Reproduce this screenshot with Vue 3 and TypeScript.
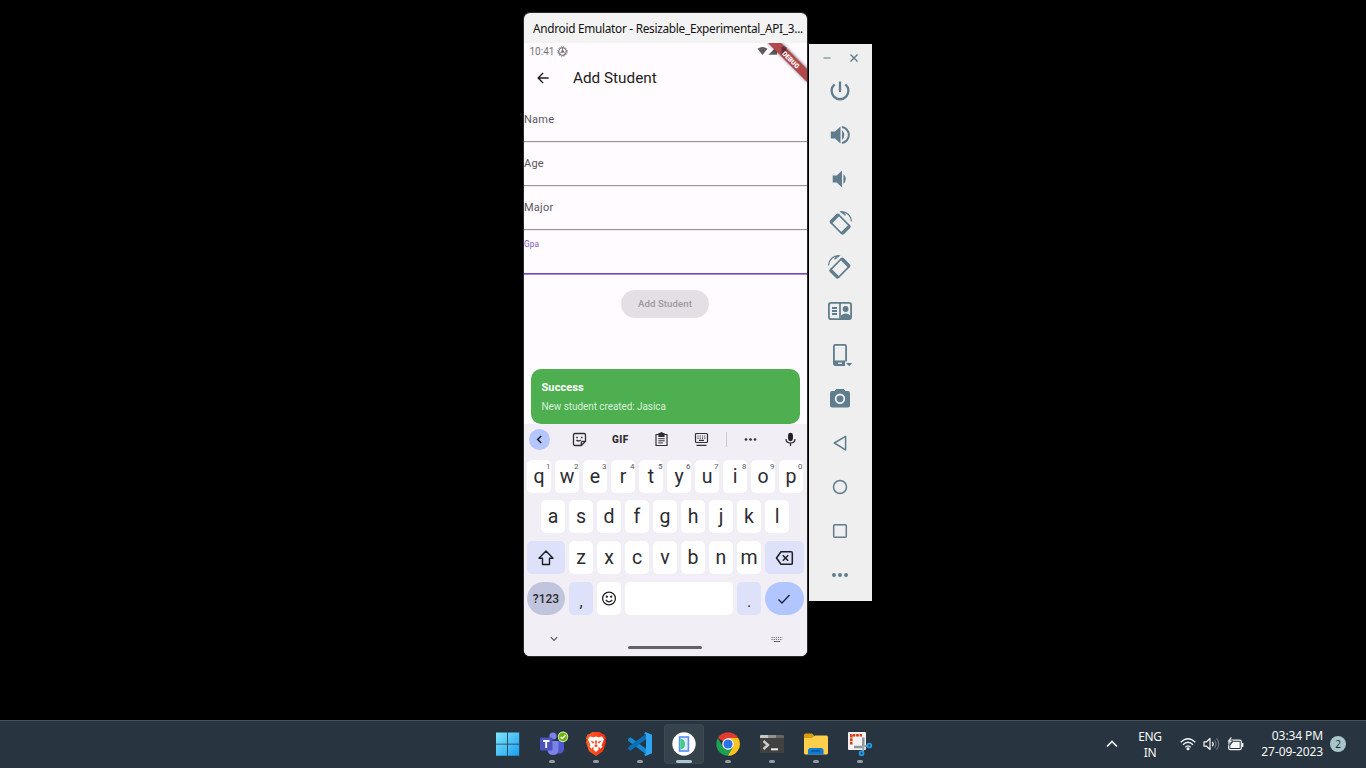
<script setup lang="ts">
interface Key { label: string; hint?: string }

const topKeys: Key[] = 'qwertyuiop'.split('').map((label, i) => ({ label, hint: String((i + 1) % 10) }))
const homeKeys: Key[] = 'asdfghjkl'.split('').map((label) => ({ label }))
const bottomKeys: Key[] = 'zxcvbnm'.split('').map((label) => ({ label }))
const fields: string[] = ['Name', 'Age', 'Major']
</script>

<template>
  <div class="screen">
    <main class="desktop">
      <section class="phone">
        <header class="titlebar"><span>Android Emulator - Resizable_Experimental_API_3...</span></header>
        <div class="app">
          <div class="status">
            <span class="clock">10:41</span>
            <svg class="bug" width="11" height="11" viewBox="0 0 11 11" fill="none" stroke="#69666b">
              <circle cx="5.5" cy="5.5" r="3.7" stroke-width="1.1" />
              <circle cx="5.5" cy="5.5" r="4.7" stroke-width="1" stroke-dasharray="1.2 1.26" />
              <path d="M5.5 5.5V2M5.5 5.5l3 2M5.5 5.5l-3 2" stroke-width=".8" />
              <circle cx="5.5" cy="5.5" r="1.2" fill="#69666b" stroke="none" />
            </svg>
            <svg class="signals" width="22" height="12" viewBox="0 0 22 12" fill="#5f5c61">
              <path d="M.5 3.8Q5.5 0 10.5 3.8L5.5 9.9z" />
              <path d="M20 1.2V9.8H11.4z" />
            </svg>
          </div>
          <svg class="ribbon" width="50" height="50" viewBox="0 0 50 50">
            <defs><filter id="soft" x="-20%" y="-20%" width="140%" height="140%"><feGaussianBlur stdDeviation="1.6" /></filter></defs>
            <path d="M10 -1L24 -1L51 26V40z" fill="#000" opacity=".5" filter="url(#soft)" />
            <path d="M11 0H24L50 26V39z" fill="#b1484b" />
            <path d="M24.5 4.2h1V3.400h3v.8h1v7.600h-5z" fill="#50272a" opacity=".8" />
            <text x="33.600" y="17" transform="rotate(45 33.6 17)" text-anchor="middle" dominant-baseline="central">DEBUG</text>
          </svg>
          <div class="appbar">
            <svg width="12" height="12" viewBox="0 0 12 12" fill="none" stroke="#1f1d21" stroke-width="1.3"><path d="M11.6 6H1.2M6.1 1L1.1 6l5 5" /></svg>
            <h1>Add Student</h1>
          </div>
          <div class="form">
            <div v-for="f in fields" :key="f" class="field">{{ f }}</div>
            <div class="field focused">Gpa</div>
            <div class="submit">Add Student</div>
          </div>
          <div class="snack">
            <strong>Success</strong>
            <span>New student created: Jasica</span>
          </div>
          <div class="keyboard">
            <div class="tools">
              <span class="back"><svg width="21" height="21" viewBox="0 0 21 21" fill="none" stroke="#1b1c20" stroke-width="1.5"><path d="M12.2 7L8.7 10.5l3.5 3.5" /></svg></span>
              <svg width="15" height="15" viewBox="0 0 15 15" fill="none" stroke="#303034" stroke-width="1.3">
                <path d="M3 1.5h9q1.5 0 1.5 1.5v6.3L9.3 13.5H3Q1.5 13.5 1.5 12V3q0-1.5 1.5-1.5z" /><path d="M13.4 9.3H10.5q-1.2 0-1.2 1.2v3" /><path d="M4.5 8q1.800 2 4.500 0" /><path d="M4.3 5.400h1.500M9 5.400h1.500" stroke-width="1.5" />
              </svg>
              <b class="gif">GIF</b>
              <svg width="15" height="15" viewBox="0 0 15 15" fill="none" stroke="#303034" stroke-width="1.2">
                <path d="M2 2.500h11v11H2z" stroke-linejoin="round" /><path d="M5 2.500V4.300h5V1.600H5z" fill="#303034" /><circle cx="7.500" cy="1.700" r="1" /><path d="M4.300 6.700h6.400M4.300 8.800h6.400M4.300 10.900h4.500" stroke-width="1" />
              </svg>
              <svg width="15" height="15" viewBox="0 0 15 15" fill="none" stroke="#303034" stroke-width="1.2">
                <rect x="1.500" y="1.500" width="12" height="9" rx="1" /><path d="M3.500 4h8M3.500 6.100h8" stroke-dasharray="1.100 1.150" /><path d="M5 8.400h5M2.500 13.300h10" />
              </svg>
              <i class="sep"></i>
              <svg width="13" height="5" viewBox="0 0 13 5" fill="#303034"><circle cx="2" cy="2.500" r="1.350" /><circle cx="6.500" cy="2.500" r="1.350" /><circle cx="11" cy="2.500" r="1.350" /></svg>
              <svg width="11" height="15" viewBox="0 0 11 15" fill="none" stroke="#222226" stroke-width="1.200"><rect x="3.700" y="1.400" width="3.600" height="7.200" rx="1.800" fill="#222226" /><path d="M1 7q0 4 4.500 4T10 7M5.500 11v3" /></svg>
            </div>
            <div class="row">
              <span v-for="k in topKeys" :key="k.label" class="key">{{ k.label }}<sup>{{ k.hint }}</sup></span>
            </div>
            <div class="row home">
              <span v-for="k in homeKeys" :key="k.label" class="key">{{ k.label }}</span>
            </div>
            <div class="row third">
              <span class="key wide tint"><svg width="18" height="18" viewBox="0 0 18 18" fill="none" stroke="#1f2025" stroke-width="1.400"><path d="M9 2L16 9.300H12.500V15.500H5.500V9.300H2z" stroke-linejoin="round" /></svg></span>
              <span v-for="k in bottomKeys" :key="k.label" class="key">{{ k.label }}</span>
              <span class="key wide tint"><svg width="19" height="16" viewBox="0 0 19 16" fill="none" stroke="#1f2025" stroke-width="1.500"><path d="M6 1.700h10.200q1.100 0 1.100 1.100v10.400q0 1.100-1.100 1.100H6L1.500 8z" stroke-linejoin="round" /><path d="M7.800 5.200l5.400 5.600M13.200 5.200l-5.400 5.600" /></svg></span>
            </div>
            <div class="row fourth">
              <span class="key wide round sym">?123</span>
              <span class="key tint punct">,</span>
              <span class="key"><svg width="16" height="16" viewBox="0 0 16 16" fill="none" stroke="#222226" stroke-width="1.300"><circle cx="8" cy="7.500" r="6.400" /><path d="M4.800 8.800q3.200 4 6.400 0" /><circle cx="5.800" cy="5.700" r=".500" fill="#222226" /><circle cx="10.200" cy="5.700" r=".500" fill="#222226" /></svg></span>
              <span class="key space"></span>
              <span class="key tint punct">.</span>
              <span class="key wide round enter"><svg width="14" height="12" viewBox="0 0 14 12" fill="none" stroke="#1c2540" stroke-width="1.400"><path d="M1.500 6.500l3.500 3.500L12.500 2" /></svg></span>
            </div>
            <div class="nav">
              <svg width="8" height="6" viewBox="0 0 8 6" fill="none" stroke="#55535a" stroke-width="1.100"><path d="M.8 1.200L4 4.400l3.200-3.200" /></svg>
              <i class="handle"></i>
              <svg width="12" height="7" viewBox="0 0 12 7" stroke="#66646a" stroke-width="1"><path d="M.5 1.500h11M.5 3.500h11" stroke-dasharray="1.100 1.050" /><path d="M3 5.500h6" /></svg>
            </div>
          </div>
        </div>
      </section>

      <aside class="panel">
        <div class="winctl">
          <svg width="10" height="10" viewBox="0 0 10 10" stroke="#8ba0aa" stroke-width="1.500"><path d="M1.500 5h7" /></svg>
          <svg width="10" height="10" viewBox="0 0 10 10" stroke="#5d7987" stroke-width="1.400"><path d="M1.500 1.500l7 7M8.500 1.500l-7 7" /></svg>
        </div>
        <!-- power -->
        <svg viewBox="0 0 32 32"><path class="ln" stroke-width="2.300" d="M16 6.500v10.500M10.600 9.400a8.400 8.400 0 1 0 10.800 0" /></svg>
        <!-- volume up -->
        <svg viewBox="0 0 32 32"><path class="fl" d="M6.800 12.500h4.200l5.500-5v17L11 19.500H6.800zM18 11q4.600 5 0 10z" /><path class="ln" stroke-width="2" d="M18 8a8.100 8.100 0 0 1 0 16" /></svg>
        <!-- volume down -->
        <svg viewBox="0 0 32 32"><path class="fl" d="M8.700 12.500h4l5.300-4.900v16.800l-5.300-4.900h-4zM19.400 11q4.800 5 0 10z" /></svg>
        <!-- rotate left -->
        <svg viewBox="0 0 32 32"><g transform="translate(0 1) rotate(-45 16 16)"><rect class="ln" x="10.500" y="7.500" width="11" height="17" rx="1.500" stroke-width="1.600" /><path class="fl" d="M9.700 8.500q0-2 2-2h8.600q2 0 2 2v1.500H9.700zM9.700 22.500h12.600v1.500q0 2-2 2h-8.600q-2 0-2-2z" /></g><path class="ln" stroke-width="1.200" d="M16.500 4.900q9.500-.4 11 9.400" /><path class="fl" d="M15.500 4.300h3.500l3 3.700-1 .8z" /></svg>
        <!-- rotate right -->
        <svg viewBox="0 0 32 32"><g transform="translate(0 1) rotate(45 16 16)"><rect class="ln" x="10.500" y="7.500" width="11" height="17" rx="1.500" stroke-width="1.600" /><path class="fl" d="M9.700 8.500q0-2 2-2h8.600q2 0 2 2v1.500H9.700zM9.700 22.500h12.600v1.500q0 2-2 2h-8.600q-2 0-2-2z" /></g><path class="ln" stroke-width="1.200" d="M15.500 4.900q-9.500-.4-11 9.400" /><path class="fl" d="M16.500 4.300h-3.500l-3 3.700 1 .8z" /></svg>
        <!-- fold posture -->
        <svg viewBox="0 0 32 32"><rect class="ln" x="4.900" y="7.900" width="22.200" height="16.200" rx="2" stroke-width="1.800" /><path class="ln" stroke-width="1.700" d="M16 8v16" /><path class="ln" stroke-width="1.900" d="M8 13h5M8 16h5M8 19h5" /><circle class="fl" cx="21.600" cy="14" r="2.900" /><path class="fl" d="M17 24v-3.500q4.500-3.800 9.500 0V24z" /></svg>
        <!-- device size -->
        <svg viewBox="0 0 32 32"><rect class="ln" x="9.900" y="5.900" width="12.200" height="20.200" rx="1.500" stroke-width="1.800" /><path class="fl" d="M9.500 21.500h13v3.500q0 1.500-1.500 1.500H11q-1.500 0-1.500-1.500z" /><path d="M14 24.200h4" stroke="#efefef" stroke-width="1.300" /><path class="halo" d="M21 22.500h8v7h-8z" /><path class="fl" d="M22 24h6.200l-3.100 3.200z" /></svg>
        <!-- camera -->
        <svg viewBox="0 0 32 32"><path class="fl" d="M12.300 6h7.400l1.800 2H24q2 0 2 2v12.500q0 2-2 2H8q-2 0-2-2V10q0-2 2-2h2.500z" /><circle cx="16" cy="15.800" r="4.300" fill="none" stroke="#efefef" stroke-width="1.800" /></svg>
        <svg viewBox="0 0 32 32"><path class="ln" stroke-width="1.500" stroke-linejoin="round" d="M21.600 9.300v13.600L10.300 16z" /></svg>
        <svg viewBox="0 0 32 32"><circle class="ln" stroke-width="1.500" cx="16" cy="16" r="6.500" /></svg>
        <svg viewBox="0 0 32 32"><rect class="ln" stroke-width="1.500" x="9.700" y="9.700" width="12.600" height="12.600" rx="1" /></svg>
        <svg viewBox="0 0 32 32"><circle class="fl" cx="10" cy="16" r="2" /><circle class="fl" cx="16" cy="16" r="2" /><circle class="fl" cx="22" cy="16" r="2" /></svg>
      </aside>
    </main>

    <footer class="taskbar">
      <div class="apps">
        <span class="tile">
          <svg viewBox="0 0 24 24"><defs><linearGradient id="win" x1="0" y1="0" x2="1" y2="1"><stop offset="0" stop-color="#7ee8fb" /><stop offset="1" stop-color="#1a9df0" /></linearGradient></defs><path fill="url(#win)" d="M0 .5h11.200v11.200H0zM12 .5h11.200v11.200H12zM0 12.500h11.200v11.200H0zM12 12.500h11.200v11.200H12z" /></svg>
        </span>
        <span class="tile run">
          <svg viewBox="0 0 24 24"><circle cx="13" cy="4" r="3.600" fill="#7b83eb" /><path d="M17 9h7v8q0 4-4 4.500h-3z" fill="#5059c9" /><path d="M7.500 9h11v8q0 6-5.500 6t-5.500-6z" fill="#7b83eb" /><rect y="5.500" width="12.500" height="13" rx="1" fill="#4b53bc" /><path d="M3 9h6.500M6.200 9v7" stroke="#fff" stroke-width="1.900" /><circle cx="23" cy="4.800" r="5.200" fill="#eaf5da" /><circle cx="23" cy="4.800" r="4.400" fill="#6bb700" /><path d="M20.600 4.900l1.700 1.700 3.200-3.400" stroke="#fff" stroke-width="1.400" fill="none" /></svg>
        </span>
        <span class="tile run">
          <svg viewBox="0 0 24 24"><defs><linearGradient id="brv"><stop offset="0" stop-color="#ff6327" /><stop offset="1" stop-color="#f52b10" /></linearGradient></defs><path fill="url(#brv)" d="M8 0h8l2.300 2 2.200.5L22 6l-.7 2 .7 2.300-3 9L12 24l-7-4.700-3-9L2.700 8 2 6l1.500-3.500L5.700 2z" /><path fill="#fff" d="M6 4.500l3.500.7L12 4.600l2.500.6 3.500-.7 2 3-1 2.300-1.500 3.500 1 1.500-2 2-1-1.500-1.500.5.8 1.500L12 20l-2.800-2.700.8-1.500-1.500-.5-1 1.500-2-2 1-1.500L5 9.800 4 7.500z" /><path fill="#f94720" d="M6.500 8.500l4 1.500-1.500 1.700zM17.500 8.500l-4 1.500 1.500 1.700zM11 8.500h2l-.4 4.500 1.600 1L12 15.200 9.800 14l1.600-1z" /></svg>
        </span>
        <span class="tile run">
          <svg viewBox="0 0 24 24"><path d="M0 7L2.500 5.300 19 17.500v5.500L.3 9z" fill="#118bd6" /><path d="M.3 15L19 1v5.500L2.500 18.700 0 17z" fill="#0b6fb8" /><path d="M17.500 0L24 2.800v18.400L17.500 24 16 22.600l2-.8V2.200L16 1.400z" fill="#2ca5f2" /></svg>
        </span>
        <span class="tile run active">
          <svg viewBox="0 0 24 24"><circle cx="12" cy="12" r="11.700" fill="#fff" /><rect x="7.600" y="5" width="8.800" height="14" fill="#dfe9fd" stroke="#5a8cf3" stroke-width="1.600" /><path d="M8.500 6.500Q13 7.500 13 12t-4.500 5.500z" fill="#38cf7e" /></svg>
        </span>
        <span class="tile run">
          <svg viewBox="0 0 24 24"><path d="M12 12L1.900 6A11.800 11.800 0 0 1 22.200 6z" fill="#e33b2e" /><path d="M12 12L12 6H22.200A11.800 11.800 0 0 1 11.600 23.800L17 15z" fill="#fcc31e" /><path d="M12 12l5 3-5.400 8.800A11.800 11.800 0 0 1 1.900 6L7 15z" fill="#1ea052" /><circle cx="12" cy="12" r="5.800" fill="#fff" /><circle cx="12" cy="12" r="4.600" fill="#2b72ea" /></svg>
        </span>
        <span class="tile run">
          <svg viewBox="0 0 24 24"><rect y="3" width="24" height="18" rx="1" fill="#414141" /><path d="M0 6V4q0-1 1-1h7v3z" fill="#c6c6c6" /><path d="M8 3h8v3H8z" fill="#939393" /><path d="M16 3h7q1 0 1 1v2h-8z" fill="#666" /><path d="M3.500 9l4.500 4-4.500 4" fill="none" stroke="#ccc" stroke-width="2.400" /><path d="M11 17.300h7" stroke="#eee" stroke-width="2" /></svg>
        </span>
        <span class="tile run">
          <svg viewBox="0 0 24 24"><path d="M0 3q0-1.500 1.500-1.500H8L10.500 4v4H0z" fill="#dc9c0e" /><path d="M0 6h8l3-2.500h11.500Q24 3.500 24 5v16q0 1.500-1.500 1.500h-21Q0 22.500 0 21z" fill="#ffcf4b" /><path d="M4 22.500V18.500q0-2.500 2.500-2.500h10.500q2.500 0 2.500 2.500v4z" fill="#117bd4" /><path d="M7 19h9" stroke="#0757a0" stroke-width="1.500" /></svg>
        </span>
        <span class="tile run">
          <svg viewBox="0 0 24 24"><rect width="18" height="18" rx="1" fill="#f3f1f1" /><path d="M3.300 12.500V3.300H14" fill="none" stroke="#d83b13" stroke-width="2.500" stroke-dasharray="2.700 .8" /><path d="M15.300 5.500V15M6 15h10" fill="none" stroke="#8e9699" stroke-width="2.500" /><path d="M14 14.500l5-.8M15.300 14v3.500l-.8 2" fill="none" stroke="#9ba6ab" stroke-width="2" /><circle cx="21.300" cy="13.500" r="1.900" fill="none" stroke="#1c9de5" stroke-width="1.900" /><circle cx="13.600" cy="21.300" r="1.900" fill="none" stroke="#1c9de5" stroke-width="1.900" /></svg>
        </span>
      </div>
      <div class="tray">
        <svg width="12" height="8" viewBox="0 0 12 8" fill="none" stroke="#f5f7f8" stroke-width="1.600"><path d="M1 6.500l5-5 5 5" /></svg>
        <div class="lang"><span>ENG</span><span>IN</span></div>
        <div class="net">
          <svg width="16" height="14" viewBox="0 0 16 14" fill="none" stroke="#f5f7f8" stroke-width="1.300"><path d="M.7 5.300q7.300-7.200 14.600 0M3 7.800q5-5 10 0M5.300 10.200q2.700-2.700 5.400 0" /><circle cx="8" cy="11.800" r="1.500" fill="#f5f7f8" stroke="none" /></svg>
          <svg width="17" height="14" viewBox="0 0 17 14" fill="none" stroke="#f5f7f8" stroke-width="1.200"><path d="M1 4.800h2.500L7 1.500v11L3.500 9.200H1z" stroke-linejoin="round" /><path d="M9.200 4.800q2 2.200 0 4.400" /><path d="M11.400 3q3.200 4 0 8M13.500 1.200q4.500 5.800 0 11.600" stroke="#667079" /></svg>
          <svg width="17" height="14" viewBox="0 0 17 14" fill="none" stroke="#f5f7f8"><rect x="1.700" y="3.200" width="12.600" height="9.400" rx="1.600" stroke-width="1.200" /><path d="M3.300 8.500L6 4.800h6.700v6.200H3.300z" fill="#f5f7f8" stroke="none" /><path d="M15.600 6v4" stroke-width="1.600" /><path d="M3.500 0L.1 4.900h2.100l-.8 3.500 4.300-5H3.500L5 0z" fill="#f5f7f8" stroke="#28343f" stroke-width=".5" /></svg>
        </div>
        <div class="date"><span>03:34 PM</span><span>27-09-2023</span></div>
        <span class="badge">2</span>
      </div>
    </footer>
  </div>
</template>

<style>
html, body { margin: 0; overflow: hidden; background: #000; }
</style>

<style scoped>
* { box-sizing: border-box; }
svg { display: block; flex: none; }
.screen { width: 1366px; height: 768px; display: flex; flex-direction: column; background: #000; }
.desktop { height: 720px; padding: 13px 0 0 524px; display: flex; align-items: flex-start; gap: 2px; }

.phone { width: 283px; height: 643px; border-radius: 6px; overflow: hidden; background: #f3f3f3; box-shadow: 0 0 0 1px #2a2a2a; }
.titlebar { height: 30px; padding-left: 9px; font: 11.8px/30px "Noto Sans", "Open Sans", sans-serif; letter-spacing: -0.28px; color: #111; white-space: nowrap; }
.app { position: relative; height: 613px; background: #fffbff; font-family: Roboto, sans-serif; display: flex; flex-direction: column; }
.status { height: 16px; padding-left: 5.5px; display: flex; align-items: center; }
.clock { width: 27.5px; font-size: 10px; color: #757277; }
.signals { margin-left: 189px; }
.ribbon { position: absolute; top: 0; right: 0; }
.ribbon text { font: 900 6.6px Roboto, sans-serif; fill: #fff; }
.appbar { height: 39px; padding-left: 13px; display: flex; align-items: center; gap: 24px; }
.appbar svg { margin-top: -1px; }
h1 { margin: -2px 0 0; font-size: 15.3px; font-weight: 400; color: #1f1c21; }
.form { height: 271px; display: flex; flex-direction: column; }
.field { height: 44px; border-bottom: 1px solid #9b969e; font-size: 11px; line-height: 44px; letter-spacing: 0.25px; color: #5a565e; box-shadow: 0 1px #eee9ee; }
.field.focused { border-bottom-color: #7449bf; box-shadow: 0 1px #a68ad8; font-size: 8.3px; line-height: 28px; letter-spacing: 0.1px; color: #7f5ac4; }
.submit { align-self: center; width: 88px; height: 28px; margin: 16px 1px 0 0; border-radius: 14px; background: #e4dfe4; color: #9d989f; font-size: 9.6px; font-weight: 500; line-height: 28px; letter-spacing: 0.1px; text-align: center; }
.snack { position: relative; z-index: 1; height: 55px; margin: 0 7px 0.5px 6.5px; padding: 11px; border-radius: 10px; background: #4daf50; color: #fff; display: flex; flex-direction: column; }
.snack strong { font-size: 11px; line-height: 16px; letter-spacing: 0.1px; }
.snack span { margin-top: 3px; font-size: 10px; line-height: 16px; letter-spacing: -0.07px; color: #d9f0da; }
.keyboard { margin-top: -0.5px; flex: 1; background: #f1eff5; }
.tools { height: 31px; padding: 0 11px 0 5px; display: flex; align-items: center; }
.back { width: 21px; height: 21px; border-radius: 50%; background: #b4c5ff; margin-right: 22px; }
.gif { margin: 0 25px; width: 17px; font-size: 10px; font-weight: 900; letter-spacing: 0.4px; color: #303034; text-align: center; }
.gif + svg { margin-right: 25px; }
.sep { width: 1px; height: 15px; margin: 0 18px 0 17px; background: #cbc9cf; }
.sep + svg { margin-right: 28px; }
.row { display: flex; gap: 4px; height: 33px; margin: 5px 3px 0; }
.home { margin: 7px 17px 0; }
.third, .fourth { margin-top: 8px; }
.key { position: relative; width: 24px; flex: none; border-radius: 5px; background: #fff; display: flex; align-items: center; justify-content: center; font-size: 19.5px; line-height: 33px; color: #2b2b2f; }
.key sup { position: absolute; top: 2px; right: 0.5px; font-size: 8px; line-height: 9px; color: #5b5b5f; }
.wide { width: 38px; }
.tint { background: #dde1f9; }
.third .wide:last-child, .fourth .wide:last-child { width: 38.5px; }
.round { border-radius: 17px; }
.sym { background: #c0c5dd; font-size: 12px; font-weight: 500; padding-top: 1px; }
.punct { font-size: 16px; padding-top: 5px; }
.space { width: 108px; }
.enter { background: #b1c5ff; }
.nav { height: 41px; display: flex; align-items: flex-start; padding: 21px 24px 0 25.5px; justify-content: space-between; }
.handle { width: 74px; height: 3px; border-radius: 2px; background: #656267; margin: 10px 0 0 1.5px; }

.panel { width: 63px; height: 557px; margin-top: 31px; background: #efefef; display: flex; flex-direction: column; align-items: center; gap: 12px; }
.panel > svg { width: 32px; height: 32px; margin-left: -1px; }
.winctl { width: 100%; height: 19px; padding: 9px 0 0 13px; display: flex; gap: 17px; }
.ln { fill: none; stroke: #5f7d8c; }
.fl { fill: #5f7d8c; }
.halo { fill: #efefef; }

.taskbar { height: 48px; border-top: 1px solid #48525b; background: #28343f; display: flex; font-family: "Noto Sans", "Open Sans", sans-serif; color: #f7f9fa; }
.apps { display: flex; gap: 4px; padding: 3px 0 0 488px; }
.tile { position: relative; width: 40px; height: 40px; padding: 8px; border-radius: 4px; }
.tile svg { width: 24px; height: 24px; overflow: visible; }
.run::after { content: ""; position: absolute; bottom: 1px; left: 17px; width: 6px; height: 3px; border-radius: 2px; background: #959ca2; }
.active { background: #36424c; box-shadow: inset 0 0 0 1px #3e4a53; }
.active::after { left: 12px; width: 16px; background: #a9c8cf; }
.tray { flex: 1; display: flex; align-items: center; padding: 0 20px 1px 226px; }
.lang { width: 40px; margin: 2px 10px 0 12px; font-size: 12px; line-height: 16px; display: flex; flex-direction: column; align-items: center; letter-spacing: -0.3px; }
.net { display: flex; gap: 7px; }
.date { margin-left: auto; font-size: 12px; line-height: 16px; display: flex; flex-direction: column; align-items: flex-end; letter-spacing: -0.1px; }
.badge { width: 16px; height: 16px; margin-left: 7px; border-radius: 50%; background: #a9c5cc; color: #1f2a30; font-size: 10px; line-height: 16px; text-align: center; }
</style>
